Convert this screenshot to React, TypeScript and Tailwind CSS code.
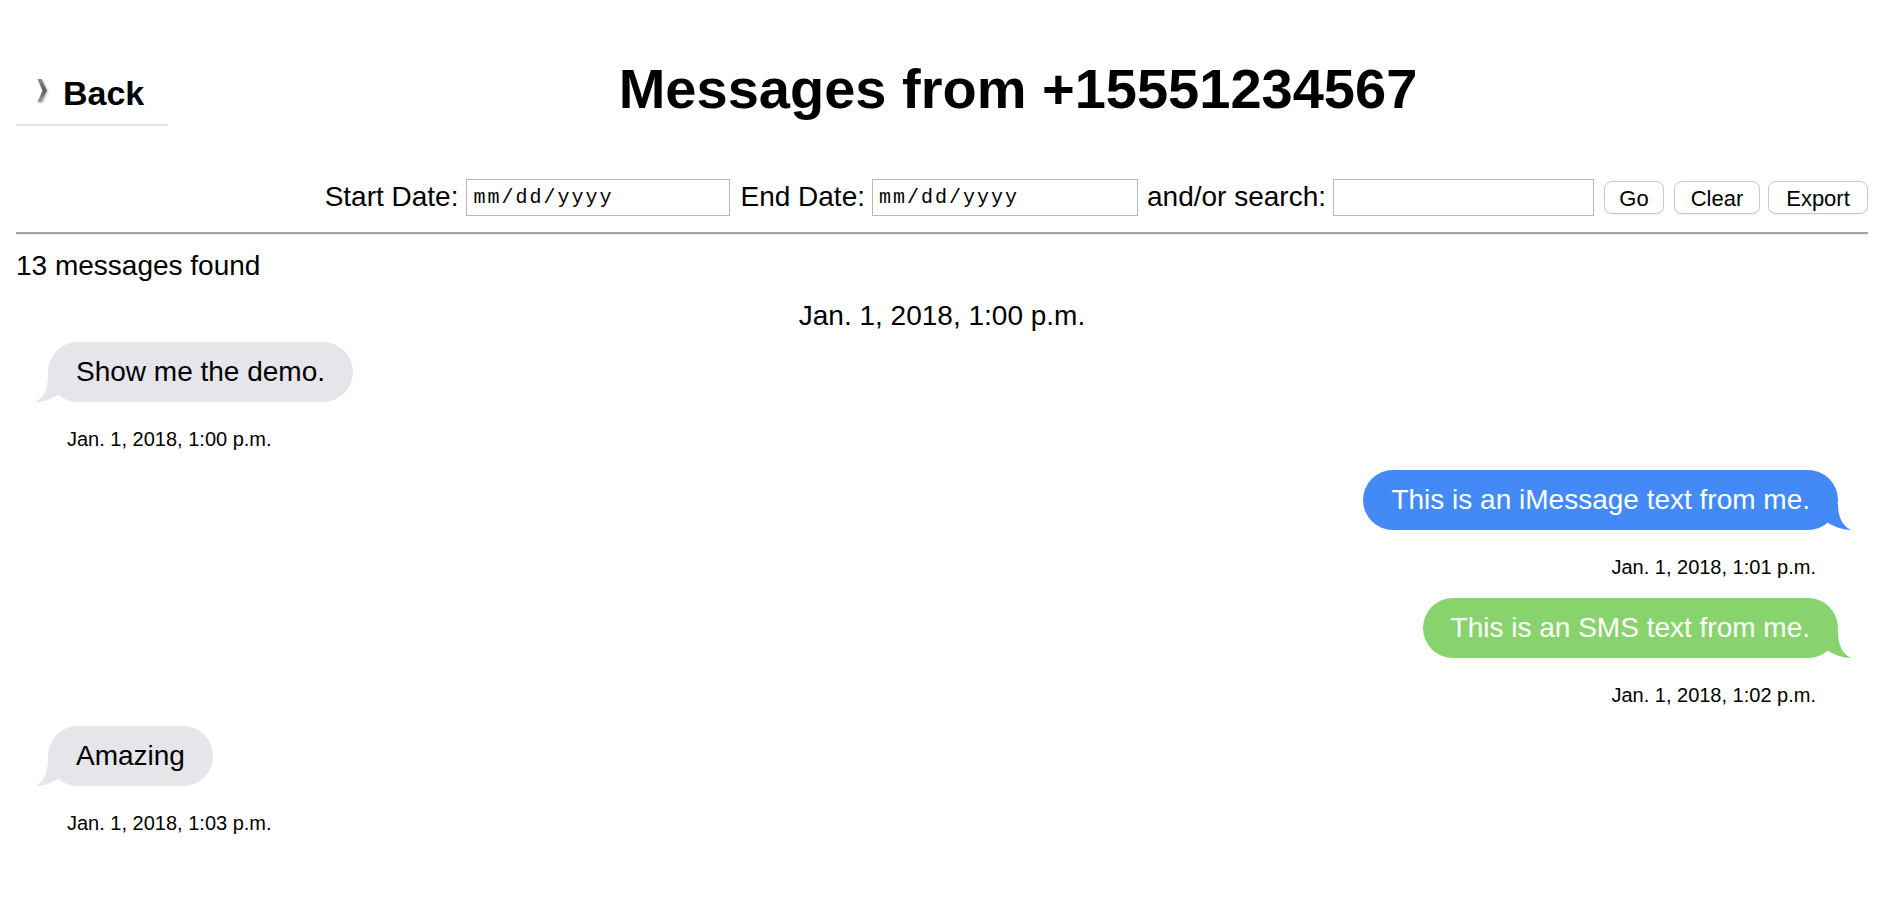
type Message = {
  text: string;
  time: string;
  from: 'them' | 'imessage' | 'sms';
};

const messages: Message[] = [
  { text: 'Show me the demo.', time: 'Jan. 1, 2018, 1:00 p.m.', from: 'them' },
  { text: 'This is an iMessage text from me.', time: 'Jan. 1, 2018, 1:01 p.m.', from: 'imessage' },
  { text: 'This is an SMS text from me.', time: 'Jan. 1, 2018, 1:02 p.m.', from: 'sms' },
  { text: 'Amazing', time: 'Jan. 1, 2018, 1:03 p.m.', from: 'them' },
];

function Tail({ mine, color }: { mine: boolean; color: string }) {
  if (mine) {
    return (
      <svg className="absolute bottom-0 -right-[13px] h-[26px] w-[33px]" viewBox="0 0 33 26">
        <path d="M20 0 C20 14 25 22 33 26 C25 26 17 23 10 19 L10 0 Z" fill={color} />
      </svg>
    );
  }
  return (
    <svg className="absolute bottom-0 -left-[13px] h-[26px] w-[33px]" viewBox="0 0 33 26">
      <path d="M13 0 C13 14 8 22 0 26 C8 26 16 23 23 19 L23 0 Z" fill={color} />
    </svg>
  );
}

function Bubble({ msg }: { msg: Message }) {
  const mine = msg.from !== 'them';
  const color = msg.from === 'imessage' ? '#448af7' : msg.from === 'sms' ? '#89d36e' : '#e5e5ea';
  const bubbleClass =
    msg.from === 'imessage'
      ? 'bg-[#448af7] text-white'
      : msg.from === 'sms'
        ? 'bg-[#89d36e] text-white'
        : 'bg-[#e5e5ea] text-black';

  return (
    <div className={mine ? 'flex flex-col items-end mr-[30px]' : 'flex flex-col items-start ml-[32px]'}>
      <div className={`relative rounded-[30px] px-[28px] py-[14px] text-[28px] leading-[32px] ${bubbleClass}`}>
        <Tail mine={mine} color={color} />
        <span className="relative">{msg.text}</span>
      </div>
      <div className={`mt-[26px] text-[20px] leading-[23px] ${mine ? 'mr-[22px]' : 'ml-[19px]'}`}>
        {msg.time}
      </div>
    </div>
  );
}

export default function App() {
  return (
    <div className="min-h-screen bg-white px-4 pb-10 text-black" style={{ fontFamily: '"Liberation Sans", Arial, sans-serif' }}>
      {/* header */}
      <div className="flex items-start pt-[57px]">
        <a className="mt-[17px] flex w-[152px] items-start border-b-2 border-[#e4e4e4] pb-[11px] pl-[21px]">
          <svg className="mt-[4px] h-[25px] w-[11px] drop-shadow-[1px_1px_1px_rgba(0,0,0,0.25)]" viewBox="0 0 11 25">
            <defs>
              <linearGradient id="chev" x1="0" y1="0" x2="0" y2="1">
                <stop offset="0" stopColor="#8c8c8c" />
                <stop offset="0.5" stopColor="#5e5e5e" />
                <stop offset="1" stopColor="#9c9c9c" />
              </linearGradient>
            </defs>
            <polygon points="0.5,1 4.5,1 10,12.5 4.5,24 0.5,24 5.5,12.5" fill="url(#chev)" />
          </svg>
          <span className="ml-[15px] text-[34px] font-bold leading-[39px]">Back</span>
        </a>
        <h1 className="flex-1 text-center text-[56px] font-bold leading-[64px]">Messages from +15551234567</h1>
      </div>

      {/* filter row */}
      <div className="mt-[51px] flex h-[40px] items-center justify-end text-[28px]">
        <label>Start Date:</label>
        <input
          type="text"
          placeholder="mm/dd/yyyy"
          className="ml-[8px] h-[37px] w-[264px] border border-[#b8b8b8] px-[6px] text-[20px] tracking-[2px] placeholder:text-black"
          style={{ fontFamily: '"Liberation Mono", "Courier New", monospace' }}
        />
        <label className="ml-[10px]">End Date:</label>
        <input
          type="text"
          placeholder="mm/dd/yyyy"
          className="ml-[7px] h-[37px] w-[266px] border border-[#b8b8b8] px-[6px] text-[20px] tracking-[2px] placeholder:text-black"
          style={{ fontFamily: '"Liberation Mono", "Courier New", monospace' }}
        />
        <label className="ml-[9px]">and/or search:</label>
        <input type="text" className="ml-[7px] h-[37px] w-[261px] border border-[#b8b8b8] px-[6px] text-[20px]" />
        <button className="ml-[10px] h-[33px] w-[60px] rounded-[8px] border border-[#c8c8c8] bg-white text-[22px] shadow-[0_1px_1px_rgba(0,0,0,0.06)]">
          Go
        </button>
        <button className="ml-[10px] h-[33px] w-[86px] rounded-[8px] border border-[#c8c8c8] bg-white text-[22px] shadow-[0_1px_1px_rgba(0,0,0,0.06)]">
          Clear
        </button>
        <button className="ml-[8px] h-[33px] w-[100px] rounded-[8px] border border-[#c8c8c8] bg-white text-[22px] shadow-[0_1px_1px_rgba(0,0,0,0.06)]">
          Export
        </button>
      </div>

      <div className="mt-[15px] border-t-2 border-b border-t-[#a3a3a3] border-b-[#eeeeee]" />

      <div className="mt-[15px] text-[28px] leading-[32px]">13 messages found</div>
      <div className="mt-[18px] text-center text-[28px] leading-[32px]">Jan. 1, 2018, 1:00 p.m.</div>

      <div className="mt-[10px] flex flex-col gap-[19px]">
        {messages.map((m, i) => (
          <Bubble key={i} msg={m} />
        ))}
      </div>
    </div>
  );
}
